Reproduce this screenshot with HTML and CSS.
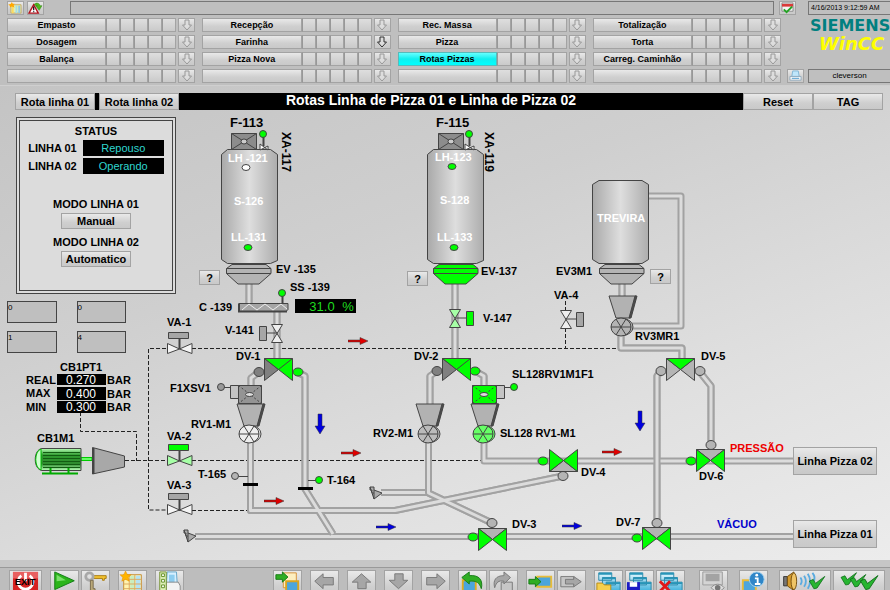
FILE: index.html
```html
<!DOCTYPE html>
<html lang="pt-BR">
<head>
<meta charset="UTF-8" />
<meta name="viewport" content="width=device-width, initial-scale=1.0" />
<title>Rotas Linha de Pizza 01 e Linha de Pizza 02</title>
<link rel="stylesheet" href="styles.css">
</head>
<body>
  <!-- Shared symbols -->
  <svg class="defs" width="0" height="0" aria-hidden="true">
    <defs>
      <linearGradient id="steel">
        <stop offset="0" stop-color="#a9a9a9"/><stop offset="0.5" stop-color="#dedede"/><stop offset="1" stop-color="#adadad"/>
      </linearGradient>
      <linearGradient id="motorBody" x1="0" y1="0" x2="0" y2="1">
        <stop offset="0" stop-color="#b8ffb8"/><stop offset="0.3" stop-color="#2e9a2e"/><stop offset="0.7" stop-color="#2e8a2e"/><stop offset="1" stop-color="#b8ffb8"/>
      </linearGradient>
      <linearGradient id="folder" x1="0" y1="0" x2="0" y2="1">
        <stop offset="0" stop-color="#e6f8ff"/><stop offset="1" stop-color="#45b4dd"/>
      </linearGradient>
      <symbol id="down" viewBox="0 0 12 12"><path d="M4 1h4v5h2.500L6 11 1.500 6H4z"/></symbol>
      <symbol id="silo" viewBox="0 0 57 115"><path d="M6.500.5h43l7 5v106l-7 3h-43l-6-4V5.500z"/></symbol>
      <symbol id="cone" viewBox="0 0 46 21"><path d="M6 .5h34l5 4v5L33 20H12L.5 9.500v-5zM.5 4.500H45M.5 9.500H45"/></symbol>
      <symbol id="filter" viewBox="0 0 27 17"><path d="M.5.5h25v16H.5zM.5.5l25 16M25.500.5l-25 16"/><ellipse cx="13" cy="8.500" rx="3" ry="2.500" fill="#ccc"/></symbol>
      <symbol id="hopper" viewBox="0 0 30 24"><path d="M1 1h27l-6 22H8z"/><path d="M27 1h2l-6 22h-2z" fill="#4c4c4c"/></symbol>
      <symbol id="wheel" viewBox="0 0 24 20"><ellipse cx="12.500" cy="10" rx="10.500" ry="8.500"/><ellipse cx="11" cy="10" rx="10" ry="9"/><path d="M1 10h20M6 2l10 16M16 2 6 18"/></symbol>
      <symbol id="bow" viewBox="0 0 26 12"><path d="M.5.5v10L12.500 6 25 .5v10L12.500 6z"/></symbol>
      <symbol id="bowV" viewBox="0 0 13 19"><path d="M.5.5h11L6 9.500l5.500 9H.5L6 9.500z"/></symbol>
      <symbol id="inlet" viewBox="0 0 14 14"><path d="M1 1h4v3l8 3-8 6zM1 1v3h2v3h2M5 4v9"/></symbol>
      <symbol id="flow" viewBox="0 0 20 8"><path d="M0 3h12V.5L20 4l-8 3.500V5H0z" stroke="#333" stroke-width="0.5"/></symbol>
      <symbol id="tick" viewBox="0 0 22 18"><path d="M1 7l5-2 3 5 12-9-10 15-4 1z"/></symbol>
      <symbol id="windows" viewBox="0 0 29 28">
        <g fill="url(#folder)" stroke="#2a86a8"><path d="M4 2h14v8H4zM8 7h14v8H8zM12 12h15v9H12z"/></g>
        <path d="M4 2h14v2H4zM8 7h14v2H8zM12 12h15v2H12z" fill="#2795b8"/>
      </symbol>
    </defs>
  </svg>

  <header class="overview">
    <div class="top-line">
      <button class="mini" aria-label="Calendário">
        <svg viewBox="0 0 16 13"><path d="M3 3h11v9H3z" fill="#dff0b8" stroke="#c9a95c"/><path d="M4 4h2v8H4z" fill="#ffd95c"/><path d="M8 4h2v8H8z" fill="#a5dce8"/><path d="M11 4h2v8h-2z" fill="#8fc7e8"/><path d="m4 0 1 2 2 0-1 2 1 2-3-1-2 1 0-2-2-1 3-1z" fill="#ffa800"/></svg>
      </button>
      <button class="mini" aria-label="Alarme">
        <svg viewBox="0 0 16 13"><path d="M6 3c3-3 6-2 7 1h2l-3 5-4-5h2z" fill="#4db81c" stroke="#2b7c10" stroke-width="0.500"/><path d="m6 3 5 9H1z" fill="#fff" stroke="#b3121c" stroke-width="1.500"/><path d="M6 5v4M6 10v1" stroke="#222" stroke-width="1.500"/></svg>
      </button>
      <div class="message-line"></div>
      <button class="mini" aria-label="Reconhecer">
        <svg viewBox="0 0 16 13"><path d="M2 1h12v9H2z" fill="#f3f3f3" stroke="#888"/><path d="M2 2h12v3H2z" fill="#d93a3a"/><path d="m4 8 3 3 6-6" fill="none" stroke="#23a323" stroke-width="2"/></svg>
      </button>
      <div class="clock">4/16/2013 9:12:59 AM</div>
    </div>
    <div class="areas">
      <nav class="menu">
        <div class="menu-group">
          <div class="menu-row"><button class="area">Empasto</button><span class="cells"><i></i><i></i><i></i><i></i><i></i></span><button class="drop" aria-label="Abrir Empasto"><svg><use href="#down"/></svg></button></div>
          <div class="menu-row"><button class="area">Dosagem</button><span class="cells"><i></i><i></i><i></i><i></i><i></i></span><button class="drop" aria-label="Abrir Dosagem"><svg><use href="#down"/></svg></button></div>
          <div class="menu-row"><button class="area">Balança</button><span class="cells"><i></i><i></i><i></i><i></i><i></i></span><button class="drop" aria-label="Abrir Balança"><svg><use href="#down"/></svg></button></div>
          <div class="menu-row"><button class="area" aria-label="Livre"></button><span class="cells"><i></i><i></i><i></i><i></i><i></i></span><button class="drop" aria-label="Abrir"><svg><use href="#down"/></svg></button></div>
        </div>
        <div class="menu-group">
          <div class="menu-row"><button class="area">Recepção</button><span class="cells"><i></i><i></i><i></i><i></i><i></i></span><button class="drop" aria-label="Abrir Recepção"><svg><use href="#down"/></svg></button></div>
          <div class="menu-row"><button class="area">Farinha</button><span class="cells"><i></i><i></i><i></i><i></i><i></i></span><button class="drop enabled" aria-label="Abrir Farinha"><svg><use href="#down"/></svg></button></div>
          <div class="menu-row"><button class="area">Pizza Nova</button><span class="cells"><i></i><i></i><i></i><i></i><i></i></span><button class="drop" aria-label="Abrir Pizza Nova"><svg><use href="#down"/></svg></button></div>
          <div class="menu-row"><button class="area" aria-label="Livre"></button><span class="cells"><i></i><i></i><i></i><i></i><i></i></span><button class="drop" aria-label="Abrir"><svg><use href="#down"/></svg></button></div>
        </div>
        <div class="menu-group">
          <div class="menu-row"><button class="area">Rec. Massa</button><span class="cells"><i></i><i></i><i></i><i></i><i></i></span><button class="drop" aria-label="Abrir Rec. Massa"><svg><use href="#down"/></svg></button></div>
          <div class="menu-row"><button class="area">Pizza</button><span class="cells"><i></i><i></i><i></i><i></i><i></i></span><button class="drop" aria-label="Abrir Pizza"><svg><use href="#down"/></svg></button></div>
          <div class="menu-row"><button class="area active">Rotas Pizzas</button><span class="cells"><i></i><i></i><i></i><i></i><i></i></span><button class="drop" aria-label="Abrir Rotas Pizzas"><svg><use href="#down"/></svg></button></div>
          <div class="menu-row"><button class="area" aria-label="Livre"></button><span class="cells"><i></i><i></i><i></i><i></i><i></i></span><button class="drop" aria-label="Abrir"><svg><use href="#down"/></svg></button></div>
        </div>
        <div class="menu-group">
          <div class="menu-row"><button class="area">Totalização</button><span class="cells"><i></i><i></i><i></i><i></i><i></i></span><button class="drop" aria-label="Abrir Totalização"><svg><use href="#down"/></svg></button></div>
          <div class="menu-row"><button class="area">Torta</button><span class="cells"><i></i><i></i><i></i><i></i><i></i></span><button class="drop" aria-label="Abrir Torta"><svg><use href="#down"/></svg></button></div>
          <div class="menu-row"><button class="area">Carreg. Caminhão</button><span class="cells"><i></i><i></i><i></i><i></i><i></i></span><button class="drop" aria-label="Abrir Carreg. Caminhão"><svg><use href="#down"/></svg></button></div>
          <div class="menu-row"><button class="area" aria-label="Livre"></button><span class="cells"><i></i><i></i><i></i><i></i><i></i></span><button class="drop" aria-label="Abrir"><svg><use href="#down"/></svg></button></div>
        </div>
      </nav>
      <div class="brand">
        <div class="logo">
          <span class="siemens">SIEMENS</span>
          <span class="wincc">WinCC</span>
        </div>
        <div class="user-line">
          <button class="mini" aria-label="Imprimir">
            <svg viewBox="0 0 16 13"><path d="M5 1h6l1 6H4z" fill="#bfe6fb" stroke="#7fb4d4"/><path d="M2 7h12v4H2z" fill="#fafafa" stroke="#8ea9bd"/><path d="M4 9h8" stroke="#3f93c9"/></svg>
          </button>
          <div class="user">cleverson</div>
        </div>
      </div>
    </div>
  </header>

  <main>
    <div class="title-bar">
      <button>Rota linha 01</button>
      <button class="second">Rota linha 02</button>
      <h1>Rotas Linha de Pizza 01 e Linha de Pizza 02</h1>
      <button class="wide">Reset</button>
      <button class="wide">TAG</button>
    </div>

    <svg class="plant" viewBox="0 110 890 450">
      <!-- Air lines -->
      <path class="air" d="M166 348.500H148.500V510H166M192 348.500H620M125 460.500H166M192 460.500H482M192 510.500H247M565.500 301V310M565.500 328V348M80.500 412V431.500H136.500V461"/>

      <!-- Pipes -->
      <g class="pipe-outer">
        <path id="p1" d="M195 536.500H793M484 443V461H793M381 492.500H428M649 196H681V326H632"/>
        <path id="p2" d="M249 283V303M277 311V360M259 372 251 378V386M250.500 443V510.500H395L563 476M297 372 305 376V489L333 534M455 283V360M437 371 430 376V404M475 371 484 376V386M428.500 443V493L492 523M622 283V297M621 335V348H682V359M661 371 657 376V523M699 371 711 386V445"/>
      </g>
      <g class="pipe-inner"><use href="#p1"/></g>
      <g class="pipe-outer"><use href="#p2"/></g>
      <g class="pipe-inner"><use href="#p2"/></g>

      <!-- Silos -->
      <g class="line">
        <use href="#silo" x="221" y="149" width="57" height="115" fill="url(#steel)"/>
        <use href="#silo" x="427" y="149" width="57" height="115" fill="url(#steel)"/>
        <path d="M599 180.500h43l6.500 4v75l-6.500 4h-43l-6.500-4v-75z" fill="url(#steel)"/>
        <use href="#cone" x="226" y="264" width="46" height="21" fill="#b4b4b4"/>
        <use href="#cone" x="433" y="264" width="46" height="21" fill="#0f0"/>
        <use href="#cone" x="599" y="264" width="46" height="21" fill="#b4b4b4"/>
        <use href="#filter" x="231" y="133" width="27" height="17" fill="#8c8c8c"/>
        <use href="#filter" x="438" y="133" width="27" height="17" fill="#8c8c8c"/>
        <path d="M263.500 137v9M469.500 137v9" stroke-width="2"/>
        <path d="M260 144v6l8-4v4zM465 144v6l9-4v4z" fill="#fff"/>
        <circle cx="263" cy="134" r="3.500" fill="#0f0"/>
        <circle cx="469" cy="134" r="3.500" fill="#0f0"/>
        <ellipse cx="246" cy="167.500" rx="4" ry="3" fill="#fff"/>
        <ellipse cx="248" cy="247.500" rx="4" ry="3" fill="#0f0"/>
        <ellipse cx="452" cy="166.500" rx="4" ry="3" fill="#0f0"/>
        <ellipse cx="454" cy="247.500" rx="4" ry="3" fill="#0f0"/>
      </g>

      <!-- Screw conveyor and inline valves -->
      <g class="line">
        <path d="M239 303.500h49v6l-2 2h-47z" fill="#a5a5a5"/>
        <path d="M239 303.500v8h48" fill="none" stroke-width="2"/>
        <path d="m242 310 7-6 8 6 8-6 8 6 8-6 6 5" fill="none" stroke="#eee"/>
        <path d="M282.500 296v8" stroke-width="2"/>
        <circle cx="282" cy="293" r="3.500" fill="#0f0"/>
        <path d="M266 333h12M455 318h11M565 319h12"/>
        <use href="#bowV" x="271" y="324" width="13" height="19" fill="#eee"/>
        <use href="#bowV" x="449" y="309" width="13" height="19" fill="#a6ffa6"/>
        <use href="#bowV" x="560" y="310" width="13" height="19" fill="#eee"/>
        <path d="M259.500 326.500h7v14h-7zM576.500 312.500h7v14h-7z" fill="#a6a6a6"/>
        <path d="M466.500 311.500h7v14h-7z" fill="#0f0"/>
      </g>

      <!-- Air valves VA-1, VA-2, VA-3 -->
      <g class="line">
        <path d="M179.500 338v11M179.500 450v11M179.500 500v11" stroke-width="2"/>
        <path d="M168.500 332.500h20v6h-20zM168.500 493.500h20v6h-20z" fill="#a6a6a6"/>
        <path d="M168.500 444.500h20v6h-20z" fill="#0f0"/>
        <use href="#bow" x="167" y="343" width="26" height="12" fill="#f4f4f4"/>
        <use href="#bow" x="167" y="455" width="26" height="12" fill="#a6ffa6"/>
        <use href="#bow" x="167" y="504" width="26" height="12" fill="#f4f4f4"/>
      </g>

      <!-- Rotary valves -->
      <g class="line">
        <path d="M230.500 385.500h8v13h-8zM496.500 385.500h8v13h-8z" fill="#c4c4c4"/>
        <path d="M224 387.500h6M504 387.500h7M239 476.500h9M308 480.500h8"/>
        <path d="M238.500 385.500h23v18h-23z" fill="#949494"/>
        <path d="M472.500 385.500h24v18h-24z" fill="#0f0"/>
        <path d="m238.500 385.500 23 18m0-18-23 18M472.500 385.500l24 18m0-18-24 18" stroke-dasharray="2 2"/>
        <ellipse cx="249.500" cy="394.500" rx="4" ry="2" fill="#ddd"/>
        <ellipse cx="484" cy="394.500" rx="4" ry="2" fill="#ddd"/>
        <use href="#hopper" x="236" y="403" width="30" height="24" fill="#b2b2b2"/>
        <use href="#hopper" x="415" y="403" width="30" height="24" fill="#b2b2b2"/>
        <use href="#hopper" x="470" y="403" width="30" height="24" fill="#b2b2b2"/>
        <use href="#hopper" x="608" y="295" width="30" height="24" fill="#b2b2b2"/>
        <use href="#wheel" x="238" y="424" width="24" height="20" fill="#eee"/>
        <use href="#wheel" x="417" y="424" width="24" height="20" fill="#bbb"/>
        <use href="#wheel" x="472" y="424" width="24" height="20" fill="#6f6"/>
        <use href="#wheel" x="610" y="317" width="24" height="20" fill="#b4b4b4"/>
        <circle cx="221" cy="387" r="3.500" fill="#999"/>
        <circle cx="514" cy="387" r="3.500" fill="#0f0"/>
        <circle cx="235" cy="476" r="3.500" fill="#b4b4b4"/>
        <circle cx="319" cy="480" r="3.500" fill="#0f0"/>
        <path d="M243 484.500h15M298 488.500h15" stroke="#000" stroke-width="3"/>
      </g>

      <!-- Diverter valves -->
      <g class="line">
        <g fill="#808080"><ellipse cx="259" cy="372" rx="5" ry="4.500"/><ellipse cx="437" cy="371" rx="5" ry="4.500"/><path d="M264.500 358.500v22l14-11zM442.500 358.500v22l14-11z"/></g>
        <g fill="#b4b4b4">
          <ellipse cx="563" cy="476" rx="5" ry="4.500"/><ellipse cx="492" cy="523" rx="5" ry="4.500"/><ellipse cx="657" cy="523" rx="5" ry="4.500"/>
          <ellipse cx="711" cy="445" rx="5" ry="4.500"/><ellipse cx="661" cy="371" rx="5" ry="4.500"/><ellipse cx="700" cy="371" rx="5" ry="4.500"/>
          <path d="M666.500 358.500v22l14-11zM694.500 358.500v22l-14-11zM549.500 471.500h28l-14-11zM478.500 528.500h28l-14 11zM642.500 527.500h28l-14 11zM696.500 449.500h28l-14 11z"/>
        </g>
        <g fill="#0f0">
          <ellipse cx="298" cy="372" rx="5" ry="4"/><ellipse cx="475" cy="371" rx="5" ry="4"/><ellipse cx="543" cy="461" rx="5" ry="4"/>
          <ellipse cx="473" cy="537" rx="5" ry="4"/><ellipse cx="637" cy="538" rx="5" ry="4"/><ellipse cx="691" cy="461" rx="5" ry="4"/>
          <path d="M264.500 358.500h28v22l-14-11zM292.500 358.500l-14 11M442.500 358.500h28v22l-14-11zM470.500 358.500l-14 11M666.500 358.500h28l-14 11z"/>
          <path d="M549.500 449.500v22l28-22v22zM478.500 528.500v22l28-22v22zM642.500 527.500v22l28-22v22zM696.500 449.500v22l28-22v22z"/>
        </g>
      </g>

      <!-- Blower -->
      <g class="line">
        <path d="M81 457.500h11v3H81z" fill="#6f6" stroke="#0c0"/>
        <path d="M42 448.500h39v22H42c-9-1-9-21 0-22z" fill="url(#motorBody)"/>
        <path d="M41 449c-7 2-7 19 0 21z" fill="#d0ffd0" stroke="#0b0"/>
        <path d="M43 452.500h37M43 455.500h37M43 458.500h37M43 461.500h37M43 464.500h37M43 467.500h37" stroke="#125c12"/>
        <path d="M42 473.500h36M50.500 468v5M68.500 468v5" stroke="#0a0" stroke-width="2"/>
        <path d="M92.500 447.500 124.500 456v11l-32 7z" fill="#a8a8a8"/>
        <path d="M93.500 448v26" stroke-width="2"/>
        <use href="#inlet" x="183" y="529" width="14" height="14" fill="#aaa"/>
        <use href="#inlet" x="369" y="486" width="14" height="14" fill="#aaa"/>
      </g>

      <!-- Flow direction -->
      <g fill="#e00000">
        <use href="#flow" x="348" y="337" width="20" height="8"/>
        <use href="#flow" x="341" y="449" width="20" height="8"/>
        <use href="#flow" x="264" y="497" width="20" height="8"/>
        <use href="#flow" x="602" y="448" width="20" height="8"/>
      </g>
      <g fill="#0000e0">
        <use href="#flow" x="376" y="523" width="20" height="8"/>
        <use href="#flow" x="562" y="522" width="20" height="8"/>
        <path d="M318 414h4v12h3l-5 8-5-8h3zM638 411h4v12h3l-5 8-5-8h3z" stroke="#333" stroke-width="0.500"/>
      </g>

      <!-- Tags -->
      <g class="tag">
        <text class="big" x="230" y="127">F-113</text>
        <text class="big" x="436" y="127">F-115</text>
        <text class="side" transform="translate(282 132) rotate(90)">XA-117</text>
        <text class="side" transform="translate(485 132) rotate(90)">XA-119</text>
        <text x="276" y="273">EV -135</text>
        <text x="481" y="275">EV-137</text>
        <text x="290" y="291">SS -139</text>
        <text x="199" y="311">C -139</text>
        <text x="225" y="334">V-141</text>
        <text x="483" y="322">V-147</text>
        <text x="236" y="360">DV-1</text>
        <text x="414" y="360">DV-2</text>
        <text x="512" y="528">DV-3</text>
        <text x="581" y="476">DV-4</text>
        <text x="701" y="360">DV-5</text>
        <text x="699" y="480">DV-6</text>
        <text x="616" y="526">DV-7</text>
        <text x="167" y="326">VA-1</text>
        <text x="167" y="440">VA-2</text>
        <text x="167" y="489">VA-3</text>
        <text x="554" y="299">VA-4</text>
        <text x="556" y="275">EV3M1</text>
        <text x="635" y="340">RV3MR1</text>
        <text x="170" y="392">F1XSV1</text>
        <text x="191" y="428">RV1-M1</text>
        <text x="373" y="437">RV2-M1</text>
        <text x="512" y="378">SL128RV1M1F1</text>
        <text x="500" y="437">SL128 RV1-M1</text>
        <text x="198" y="478">T-165</text>
        <text x="327" y="484">T-164</text>
        <text x="37" y="442">CB1M1</text>
        <text x="60" y="371">CB1PT1</text>
        <text x="26" y="384">REAL</text>
        <text x="26" y="397">MAX</text>
        <text x="26" y="411">MIN</text>
        <text x="107" y="384">BAR</text>
        <text x="107" y="398">BAR</text>
        <text x="107" y="411">BAR</text>
        <text class="pressure" x="730" y="452">PRESSÃO</text>
        <text class="vacuum" x="717" y="528">VÁCUO</text>
      </g>
      <g class="tag light">
        <text x="228" y="162">LH -121</text>
        <text x="234" y="205">S-126</text>
        <text x="231" y="241">LL-131</text>
        <text x="435" y="161">LH-123</text>
        <text x="440" y="204">S-128</text>
        <text x="437" y="241">LL-133</text>
        <text x="597" y="222">TREVIRA</text>
      </g>

      <!-- Readings -->
      <g class="reading">
        <rect x="57" y="374" width="49" height="11"/>
        <rect x="57" y="387" width="49" height="13"/>
        <rect x="57" y="401" width="49" height="12"/>
        <rect x="295" y="299" width="61" height="14"/>
        <text x="81" y="384">0.270</text>
        <text x="81" y="398">0.400</text>
        <text x="81" y="411">0.300</text>
        <text class="percent" x="322" y="311">31.0</text>
        <text class="percent" x="348" y="311">%</text>
      </g>

      <!-- Operator controls on the canvas -->
      <foreignObject x="16" y="117" width="160" height="177">
        <section class="status">
          <h2>STATUS</h2>
          <div class="status-row"><span>LINHA 01</span><output>Repouso</output></div>
          <div class="status-row"><span>LINHA 02</span><output>Operando</output></div>
          <div class="mode"><span id="modo1">MODO LINHA 01</span><button aria-describedby="modo1">Manual</button></div>
          <div class="mode"><span id="modo2">MODO LINHA 02</span><button aria-describedby="modo2">Automatico</button></div>
        </section>
      </foreignObject>
      <foreignObject x="7" y="301" width="119" height="53">
        <div class="steps">
          <input type="text" value="0" aria-label="Passo linha 01">
          <input type="text" value="0" aria-label="Passo linha 02">
          <input type="text" value="1" aria-label="Rota linha 01">
          <input type="text" value="4" aria-label="Rota linha 02">
        </div>
      </foreignObject>
      <foreignObject x="199" y="270" width="21" height="15"><button class="key">?</button></foreignObject>
      <foreignObject x="407" y="271" width="21" height="15"><button class="key">?</button></foreignObject>
      <foreignObject x="650" y="269" width="21" height="15"><button class="key">?</button></foreignObject>
      <foreignObject x="793" y="447" width="84" height="28"><button class="key">Linha Pizza 02</button></foreignObject>
      <foreignObject x="793" y="520" width="84" height="28"><button class="key">Linha Pizza 01</button></foreignObject>
    </svg>
  </main>

  <footer class="toolbar">
    <div class="tools left">
      <button class="exit" aria-label="Sair"><svg viewBox="0 0 29 28"><path d="M1 1h27v27H1z" fill="#d62222"/><path d="M1 1h27v7H1z" fill="#e86060"/><path d="M10 5a8 8 0 1 0 9 0M14.500 2v9" fill="none" stroke="#fff" stroke-width="3"/><text x="14" y="15">EXIT</text></svg></button>
      <div class="pair">
        <button aria-label="Iniciar"><svg viewBox="0 0 29 28"><path d="M4 1v19l21-9.500z" fill="#2bb51b" stroke="#0f7a12"/><path d="M6 4v7l10-1z" fill="#7be06b"/></svg></button>
        <button aria-label="Senha"><svg viewBox="0 0 29 28"><path d="M12 5h14v3h-2v2h-2V8H12z" fill="#f2c230" stroke="#a97a0c"/><circle cx="8" cy="6" r="4" fill="none" stroke="#a8a8a8" stroke-width="3"/><path d="M9 10v15h3v-3h2v-3h-2v-9z" fill="#b9a878" stroke="#77694a"/></svg></button>
      </div>
      <button aria-label="Tabela"><svg viewBox="0 0 29 28"><path d="M5 4h19v22H5z" fill="#fff3b0" stroke="#c58a2e"/><path d="M12 5h5v20h-5z" fill="#c9eec0"/><path d="M18 5h5v20h-5z" fill="#b4e3f5"/><path d="M5 9h19M5 14h19M5 19h19M11 4v22M17 4v22" stroke="#dba85e"/><path d="m7 0 2 4 4 0-3 3 1 4-4-2-4 2 1-4-3-3h4z" fill="#ffb400" stroke="#e08900" stroke-width="0.500"/></svg></button>
      <button aria-label="Relatório"><svg viewBox="0 0 29 28"><path d="M12 1h10l1 16H11z" fill="#d6efff" stroke="#5fa3c8"/><path d="M14 4h6v9h-6z" fill="#8ccdf0"/><path d="M11 12h13l2 4v6H11z" fill="#f3f3f3" stroke="#888"/><path d="M4 1h7v24H4z" fill="#dff0b8" stroke="#72902f"/><path d="M6 3h3v3H6zM6 9h3v3H6zM6 15h3v3H6z" fill="#fff" stroke="#5c8a1c"/></svg></button>
    </div>
    <div class="tools">
      <button aria-label="Importar"><svg viewBox="0 0 29 28"><path d="M10 2h14v16H10z" fill="#fdeebf" stroke="#d58f35"/><path d="M13 11h13v14H13z" fill="#4ba5dc" stroke="#d9a520" stroke-width="2"/><path d="M2 4h7V1l6 5.500L9 12V9H2z" fill="#2fae23" stroke="#157a15"/></svg></button>
      <button aria-label="Esquerda"><svg class="dir" viewBox="0 2 29 28"><path d="m4 13 9-8v4h11v8H13v4z"/></svg></button>
      <button aria-label="Acima"><svg class="dir" viewBox="0 2 29 28"><path d="m14.500 5 10 9h-5v7h-9v-7h-6z"/></svg></button>
      <button aria-label="Abaixo"><svg class="dir" viewBox="0 2 29 28"><path d="m14.500 21-10-9h6V5h9v7h5z"/></svg></button>
      <button aria-label="Direita"><svg class="dir" viewBox="0 2 29 28"><path d="m25 13-9-8v4H5v8h11v4z"/></svg></button>
      <div class="pair">
        <button aria-label="Voltar"><svg viewBox="0 0 29 28"><path d="M4 10h14v14H4z" fill="#4ba5dc" stroke="#e0ac20" stroke-width="2"/><path d="m3 7 8-6v4c11-1 15 5 13 14-2-6-5-9-13-8v3z" fill="#2fae23" stroke="#157a15"/></svg></button>
        <button aria-label="Avançar"><svg class="dir" viewBox="0 2 29 28"><path d="M12 14h12v12H12z" fill="#c6c6c6"/><path d="m22 9-7-6v4C6 7 3 12 5 20c2-6 4-8 10-7v3z"/></svg></button>
      </div>
      <div class="pair">
        <button aria-label="Entrar"><svg viewBox="0 0 29 28"><path d="M11 6h15v11H11z" fill="#4ba5dc" stroke="#e8bc38" stroke-width="2"/><path d="M2 9h7V6l6 5.500L9 17v-3H2z" fill="#2fae23" stroke="#157a15"/></svg></button>
        <button aria-label="Próxima"><svg class="dir" viewBox="0 2 29 28"><path d="M3 8h14v11H3z" fill="#c6c6c6"/><path d="M8 11h9V8l8 5.500-8 5.500v-3H8z"/></svg></button>
      </div>
      <div class="pair">
        <button aria-label="Abrir telas"><svg viewBox="0 0 29 28"><use href="#windows"/><path d="M2 13h6l2 2h7v11H2z" fill="#f5cf4d" stroke="#b88b14"/></svg></button>
        <button aria-label="Salvar telas"><svg viewBox="0 0 29 28"><use href="#windows"/><path d="M1 12h14v15H1z" fill="#1c1cc4"/><path d="M4 12h8v5H4z" fill="#fff"/></svg></button>
        <button aria-label="Apagar telas"><svg viewBox="0 0 29 28"><use href="#windows"/><path d="m3 11 11 11M14 11 3 22" stroke="#e01818" stroke-width="3"/></svg></button>
      </div>
    </div>
    <div class="tools right">
      <button aria-label="Painel"><svg viewBox="0 0 29 28"><path d="M3 1h21v14H3z" fill="#d4d4d4" stroke="#999"/><path d="M6 3h15v8H6z" fill="#a3a3a3"/><path d="M12 18c4-5 10-5 14 0-4 5-10 5-14 0z" fill="#ddd" stroke="#888"/><circle cx="19" cy="18" r="3" fill="#777"/></svg></button>
      <button aria-label="Informação"><svg viewBox="0 0 29 28"><path d="M3 10h14v14H3z" fill="#4ba5dc" stroke="#e8bc38" stroke-width="2"/><circle cx="18" cy="9" r="8" fill="#2f86c8" stroke="#a8d4ee"/><path d="M16 8h3v6M16 14h6" fill="none" stroke="#fff" stroke-width="2"/><circle cx="18" cy="4.500" r="1.500" fill="#fff"/></svg></button>
      <div class="pair">
        <button class="double" aria-label="Silenciar"><svg viewBox="0 0 52 28"><path d="M3 6h4v10H3z" fill="#777" stroke="#333"/><path d="m7 6 7-5v20l-7-5z" fill="#d49a2c" stroke="#714c0c"/><ellipse cx="14" cy="11" rx="3" ry="9" fill="#efc466" stroke="#714c0c"/><path d="M21 7q3 4 0 8M25 5q4 6 0 12M29 3q5 8 0 16M34 2q4 5 1 9" fill="none" stroke="#5aabe0" stroke-width="2"/><use href="#tick" x="28" y="5" width="22" height="15" fill="#27b531" stroke="#0b6a15"/></svg></button>
        <button class="double" aria-label="Reconhecer alarmes"><svg viewBox="0 0 52 28"><g fill="#27b531" stroke="#0b6a15"><use href="#tick" x="5" y="1" width="20" height="15"/><use href="#tick" x="15" y="3" width="20" height="15"/><use href="#tick" x="26" y="4" width="22" height="17"/></g></svg></button>
      </div>
    </div>
  </footer>
</body>
</html>
```
FILE: styles.css
```css
* { box-sizing: border-box; }

body {
  display: flex;
  flex-direction: column;
  height: 100vh;
  margin: 0;
  overflow: hidden;
  font-family: "Liberation Sans", Arial, sans-serif;
  background: #bfbfbf;
  color: #000;
}

.defs { position: absolute; }

button {
  margin: 0;
  padding: 0;
  border: 1px solid #a3a3a3;
  background: linear-gradient(#e9e9e9, #cfcfcf 60%, #c9c9c9);
  color: #000;
  font-family: inherit;
  font-weight: bold;
  white-space: nowrap;
  cursor: pointer;
}
button:hover { filter: brightness(1.05); }

/* Overview area */
.overview {
  flex-shrink: 0;
  display: flex;
  flex-direction: column;
  gap: 3px;
  padding: 1px 0 2px 7px;
  background: #bfbfbf;
  border-bottom: 1px solid #cfcfcf;
}

.top-line { display: flex; gap: 3px; height: 14px; }
.mini { width: 17px; height: 14px; flex-shrink: 0; }
.mini svg { display: block; width: 100%; height: 100%; }
.message-line {
  flex: 1;
  margin: 0 2px 0 23px;
  border: 1px solid #777;
}
.clock, .user {
  border: 1px solid #777;
  border-right: 0;
  white-space: nowrap;
  overflow: hidden;
}
.clock {
  width: 82px;
  margin-left: 9px;
  padding-left: 2px;
  font-size: 7px;
  line-height: 12px;
}

.areas { display: flex; gap: 6px; }
.menu {
  flex: 1;
  display: grid;
  grid-template-columns: repeat(4, 1fr);
  gap: 7px;
}
.menu-group { display: flex; flex-direction: column; gap: 3px; }
.menu-row { display: flex; height: 14px; }
.area {
  flex: 1;
  font-size: 9px;
  line-height: 12px;
}
.area.active {
  background: linear-gradient(#6ff, #1ee 50%, #0ff);
  border-color: #5bb;
}
.cells { display: flex; margin-right: 2px; }
.cells i {
  width: 14px;
  border: 1px solid #a3a3a3;
  border-left-color: #989898;
  background: linear-gradient(#dedede, #cacaca);
}
.drop { width: 17px; }
.drop svg {
  display: block;
  width: 12px;
  height: 12px;
  margin: 0 auto;
  fill: #ddd;
  stroke: #999;
}
.drop.enabled svg { stroke: #333; }

.brand {
  width: 103px;
  display: flex;
  flex-direction: column;
  justify-content: space-between;
}
.logo {
  display: flex;
  flex-direction: column;
  padding-left: 23px;
  font-family: "DejaVu Sans", Verdana, sans-serif;
  font-weight: bold;
}
.siemens { font-size: 16px; line-height: 16px; color: #008080; }
.wincc {
  padding-left: 9px;
  font-size: 18px;
  line-height: 20px;
  font-style: italic;
  color: #ff0;
}
.user-line { display: flex; gap: 4px; }
.user {
  flex: 1;
  font-size: 8px;
  line-height: 12px;
  text-align: center;
}

/* Working area */
main {
  flex: 1 0 auto;
  background: linear-gradient(160deg, #c4c4c4, #cfcfcf 35%, #e0e0e0 70%, #ececec);
}
.title-bar {
  display: flex;
  height: 17px;
  margin: 7px 7px 0 15px;
  background: #000;
}
.title-bar button { width: 80px; font-size: 11px; }
.title-bar .second { margin-left: 4px; }
.title-bar .wide { width: 70px; }
.title-bar h1 {
  flex: 1;
  margin: 0;
  padding-right: 60px;
  font-size: 14px;
  line-height: 15px;
  text-align: center;
  color: #fff;
  white-space: nowrap;
}

.plant { display: block; width: 100%; height: auto; }
.air { fill: none; stroke: #222; stroke-dasharray: 4 2; }
.pipe-outer, .pipe-inner { fill: none; stroke-linejoin: round; }
.pipe-outer { stroke: #a2a2a2; stroke-width: 7px; }
.pipe-inner { stroke: #dcdcdc; stroke-width: 3px; }
.line { stroke: #444; stroke-width: 1px; }

.tag { font-size: 11px; font-weight: bold; }
.tag .big { font-size: 13px; }
.tag .side { font-size: 12px; }
.light { fill: #fff; }
.pressure { fill: #e00; }
.vacuum { fill: #00c; }
.reading text { font-size: 12px; fill: #fff; text-anchor: middle; }
.reading .percent { font-size: 13px; fill: #1fdc1f; }

.status {
  display: flex;
  flex-direction: column;
  align-items: center;
  height: 100%;
  padding-top: 3px;
  border: 4px double #444;
  background: #dcdcdc;
  font-size: 11px;
  font-weight: bold;
  line-height: 14px;
}
.status h2 { margin: 0 0 2px; font-size: 11px; }
.status-row {
  display: flex;
  align-items: center;
  gap: 6px;
  margin-bottom: 2px;
}
.status-row output {
  width: 81px;
  background: #000;
  color: #2fd6cf;
  font-weight: normal;
  line-height: 16px;
  text-align: center;
}
.mode {
  display: flex;
  flex-direction: column;
  align-items: center;
  gap: 2px;
  margin-bottom: 6px;
}
.status-row + .mode { margin-top: 21px; }
.mode button { width: 70px; height: 16px; font-size: 11px; }

.steps {
  display: grid;
  grid-template-columns: repeat(2, 1fr);
  gap: 8px 20px;
}
.steps input {
  width: 100%;
  height: 22px;
  padding: 0 0 10px 0;
  border: 1px solid #444;
  background: #bfbfbf;
  font-family: inherit;
  font-size: 8px;
}

.key { display: block; width: 100%; height: 100%; font-size: 11px; }

/* Key set */
.toolbar {
  flex-shrink: 0;
  display: flex;
  gap: 14px;
  padding: 3px 5px 0 9px;
  border-top: 7px solid #c6c6c6;
  background: #bdbdbd;
  box-shadow: inset 0 1px #999;
}
.tools { display: flex; gap: 8px; }
.tools.left { margin-right: auto; }
.tools.right { gap: 11px; }
.pair { display: flex; gap: 2px; }
.toolbar button { width: 29px; height: 28px; }
.toolbar button.exit { width: 33px; }
.toolbar button.double { width: 52px; }
.toolbar svg { display: block; width: 100%; height: 100%; }
.dir { fill: #a6a6a6; stroke: #777; }
.exit text { font-size: 10px; font-weight: bold; text-anchor: middle; }
```
